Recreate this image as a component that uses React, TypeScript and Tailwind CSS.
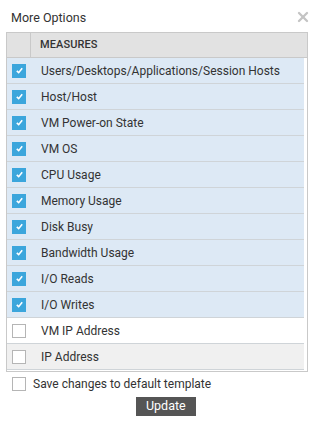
import { X } from 'lucide-react';

const measures: { label: string; checked: boolean }[] = [
  { label: 'Users/Desktops/Applications/Session Hosts', checked: true },
  { label: 'Host/Host', checked: true },
  { label: 'VM Power-on State', checked: true },
  { label: 'VM OS', checked: true },
  { label: 'CPU Usage', checked: true },
  { label: 'Memory Usage', checked: true },
  { label: 'Disk Busy', checked: true },
  { label: 'Bandwidth Usage', checked: true },
  { label: 'I/O Reads', checked: true },
  { label: 'I/O Writes', checked: true },
  { label: 'VM IP Address', checked: false },
  { label: 'IP Address', checked: false },
];

function Box({ checked }: { checked: boolean }) {
  if (checked) {
    return (
      <span className="w-[14px] h-[14px] bg-[#3ca6dc] flex items-center justify-center shrink-0">
        <svg width="9" height="9" viewBox="0 0 10 10">
          <path d="M2 5.4 L4.1 7.4 L8 2.6" fill="none" stroke="white" strokeWidth="1.8" />
        </svg>
      </span>
    );
  }
  return <span className="w-[14px] h-[14px] bg-white border border-[#b5b5b5] shrink-0" />;
}

export default function App() {
  return (
    <div className="w-[315px] h-[425px] bg-white text-[#333] text-[12px] font-['Roboto',sans-serif] relative">
      {/* Title */}
      <div className="h-[32px] flex items-start justify-between pl-[11px] pr-[4px] pt-[11px]">
        <span className="leading-[14px] text-[12.5px]">More Options</span>
        <X className="w-[16px] h-[16px] text-[#c4c4c4] -mt-[2px]" strokeWidth={3.5} />
      </div>

      {/* Table */}
      <div className="mx-[6px] w-[302px] border border-[#c9c9c9]">
        <div className="h-[25px] flex bg-[#e2e2e2] border-b border-[#c9c9c9]">
          <div className="w-[24px] border-r border-[#c9c9c9]" />
          <div className="flex items-center pl-[9px] text-[11px] font-medium tracking-[0.1px]">MEASURES</div>
        </div>
        {measures.map((m, i) => (
          <div key={m.label} className="pr-[3px]">
            <div
              className={`h-[26px] flex items-center border-b border-[#cfd4d8] ${
                m.checked ? 'bg-[#dde9f5]' : i % 2 === 0 ? 'bg-white' : 'bg-[#f0f0f0]'
              }`}
            >
              <div className="w-[34px] pl-[5px] flex items-center">
                <Box checked={m.checked} />
              </div>
              <span className="leading-none">{m.label}</span>
            </div>
          </div>
        ))}
        <div className="h-[1px]" />
      </div>

      {/* Footer */}
      <div className="flex items-center pl-[12px] mt-[4px] h-[16px]">
        <Box checked={false} />
        <span className="ml-[7px]">Save changes to default template</span>
      </div>
      <div className="flex pl-[136px] mt-[5px]">
        <button className="h-[19px] px-[10px] bg-[#555555] text-white text-[12.5px] leading-none">Update</button>
      </div>
    </div>
  );
}
